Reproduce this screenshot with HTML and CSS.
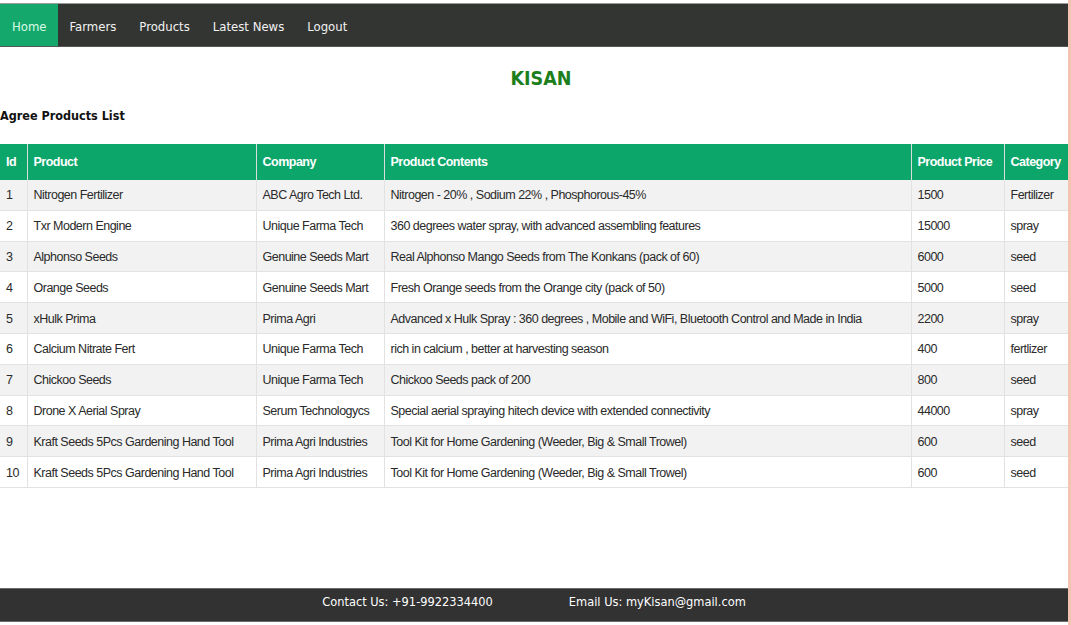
FILE: index.html
```html
<!DOCTYPE html>
<html lang="en">
<head>
<meta charset="utf-8">
<title>Kisan - Agree Products List</title>
<link rel="stylesheet" href="styles.css">
</head>
<body>
<div class="page">
  <nav class="topnav">
    <a class="nav-link active" href="#">Home</a>
    <a class="nav-link" href="#">Farmers</a>
    <a class="nav-link" href="#">Products</a>
    <a class="nav-link" href="#">Latest News</a>
    <a class="nav-link" href="#">Logout</a>
  </nav>
  <main class="content">
    <h1 class="brand">KISAN</h1>
    <h2 class="list-title">Agree Products List</h2>
    <table class="products">
      <colgroup>
        <col class="c-id"><col class="c-product"><col class="c-company"><col class="c-contents"><col class="c-price"><col class="c-category">
      </colgroup>
      <thead>
        <tr><th>Id</th><th>Product</th><th>Company</th><th>Product Contents</th><th>Product Price</th><th>Category</th></tr>
      </thead>
      <tbody>
        <tr><td>1</td><td>Nitrogen Fertilizer</td><td>ABC Agro Tech Ltd.</td><td>Nitrogen - 20% , Sodium 22% , Phosphorous-45%</td><td>1500</td><td>Fertilizer</td></tr>
        <tr><td>2</td><td>Txr Modern Engine</td><td>Unique Farma Tech</td><td>360 degrees water spray, with advanced assembling features</td><td>15000</td><td>spray</td></tr>
        <tr><td>3</td><td>Alphonso Seeds</td><td>Genuine Seeds Mart</td><td>Real Alphonso Mango Seeds from The Konkans (pack of 60)</td><td>6000</td><td>seed</td></tr>
        <tr><td>4</td><td>Orange Seeds</td><td>Genuine Seeds Mart</td><td>Fresh Orange seeds from the Orange city (pack of 50)</td><td>5000</td><td>seed</td></tr>
        <tr><td>5</td><td>xHulk Prima</td><td>Prima Agri</td><td>Advanced x Hulk Spray : 360 degrees , Mobile and WiFi, Bluetooth Control and Made in India</td><td>2200</td><td>spray</td></tr>
        <tr><td>6</td><td>Calcium Nitrate Fert</td><td>Unique Farma Tech</td><td>rich in calcium , better at harvesting season</td><td>400</td><td>fertlizer</td></tr>
        <tr><td>7</td><td>Chickoo Seeds</td><td>Unique Farma Tech</td><td>Chickoo Seeds pack of 200</td><td>800</td><td>seed</td></tr>
        <tr><td>8</td><td>Drone X Aerial Spray</td><td>Serum Technologycs</td><td>Special aerial spraying hitech device with extended connectivity</td><td>44000</td><td>spray</td></tr>
        <tr><td>9</td><td>Kraft Seeds 5Pcs Gardening Hand Tool</td><td>Prima Agri Industries</td><td>Tool Kit for Home Gardening (Weeder, Big &amp; Small Trowel)</td><td>600</td><td>seed</td></tr>
        <tr><td>10</td><td>Kraft Seeds 5Pcs Gardening Hand Tool</td><td>Prima Agri Industries</td><td>Tool Kit for Home Gardening (Weeder, Big &amp; Small Trowel)</td><td>600</td><td>seed</td></tr>
      </tbody>
    </table>
  </main>
  <footer class="footer">
    <span class="footer-item">Contact Us: +91-9922334400</span>
    <span class="footer-item">Email Us: myKisan@gmail.com</span>
  </footer>
</div>
</body>
</html>
```

FILE: styles.css
```css
html, body {
  margin: 0;
  padding: 0;
  background: #ffffff;
  overflow: hidden;
}

.page {
  width: 1071px;
  height: 625px;
  box-sizing: border-box;
  border-right: 3px solid #f3c4b2;
  padding: 3px 0 3px;
  display: flex;
  flex-direction: column;
}

.topnav {
  display: flex;
  flex: none;
  background: #333533;
  border-top: 1px solid #9a9a9a;
  border-bottom: 1px solid #555;
  height: 42px;
}

.nav-link {
  display: flex;
  align-items: center;
  padding: 3px 11px 0 12px;
  color: #f2f2f2;
  text-decoration: none;
  font-family: "DejaVu Sans Condensed", "DejaVu Sans", sans-serif;
  font-stretch: semi-condensed;
  font-size: 13px;
}

.nav-link.active {
  background: #14a86c;
  color: #d9fbe6;
}

.content {
  flex: 1;
}

.brand {
  margin: 20px 0 0;
  padding-left: 14px;
  text-align: center;
  color: #1c7f1c;
  font-family: "DejaVu Sans Condensed", "DejaVu Sans", sans-serif;
  font-stretch: semi-condensed;
  font-weight: bold;
  font-size: 19.5px;
  line-height: 24px;
}

.list-title {
  margin: 16px 0 0;
  font-family: "DejaVu Sans Condensed", "DejaVu Sans", sans-serif;
  font-stretch: semi-condensed;
  font-weight: bold;
  font-size: 12.5px;
  line-height: 18px;
  color: #111;
}

.products {
  margin-top: 19px;
  width: 1068px;
  border-collapse: collapse;
  table-layout: fixed;
  font-family: "Liberation Sans", Arial, sans-serif;
  font-size: 12.5px;
  letter-spacing: -0.5px;
  color: #2a2a2a;
}

.c-id { width: 27px; }
.c-product { width: 229px; }
.c-company { width: 128px; }
.c-contents { width: 527px; }
.c-price { width: 93px; }
.c-category { width: 64px; }

.products th {
  background: #0ca66b;
  color: #ffffff;
  font-weight: bold;
  text-align: left;
  height: 36px;
  padding: 0 6px;
  border-left: 1px solid #dcdcdc;
  white-space: nowrap;
}

.products th:first-child,
.products td:first-child {
  border-left: none;
}

.products td {
  height: 28.8px;
  padding: 1px 6px 0;
  border-left: 1px solid #e2e2e2;
  border-bottom: 1px solid #e2e2e2;
  white-space: nowrap;
}

.products tbody tr:nth-child(odd) {
  background: #f2f2f2;
}

.footer {
  flex: none;
  display: flex;
  justify-content: center;
  align-items: center;
  gap: 76px;
  height: 34px;
  box-sizing: border-box;
  padding-bottom: 7px;
  background: #323232;
  border-top: 1px solid #6a6a6a;
  border-bottom: 1px solid #6a6a6a;
  color: #ffffff;
  font-family: "DejaVu Sans Condensed", "DejaVu Sans", sans-serif;
  font-stretch: semi-condensed;
  font-size: 12.7px;
}
```
